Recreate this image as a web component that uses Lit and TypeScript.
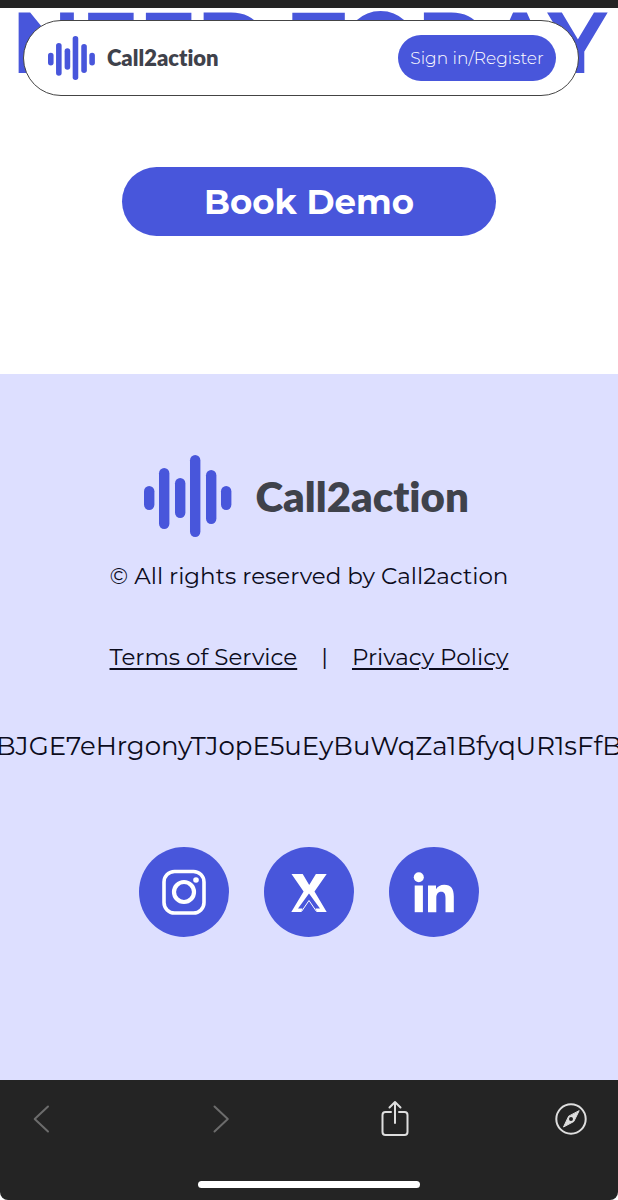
import { LitElement, html, css, svg } from "lit";
import { customElement } from "lit/decorators.js";

const bars = [
  [0, 31, 24],
  [15, 13, 61],
  [31, 23, 40],
  [46, 0, 82],
  [62, 15, 54],
  [77, 31, 24],
];

@customElement("brand-logo")
export class BrandLogo extends LitElement {
  static styles = css`
    :host {
      display: flex;
      align-items: center;
      gap: var(--logo-gap, 12px);
      color: #3f424b;
      font-family: Lato, sans-serif;
      font-size: var(--logo-size, 22px);
      font-weight: 800;
      font-variant-ligatures: none;
      line-height: 1;
    }
    .mark {
      height: var(--mark-height, 44px);
      width: auto;
      fill: #4856db;
      display: block;
    }
  `;
  render() {
    return html`
      <svg class="mark" viewBox="0 0 87.400 82" aria-hidden="true">
        ${bars.map(([x, y, h]) => svg`<rect x=${x} y=${y} width="10.4" height=${h} rx="5.2" />`)}
      </svg>
      <span>Call2action</span>
    `;
  }
}

@customElement("app-root")
export class AppRoot extends LitElement {
  static styles = css`
    :host {
      display: flex;
      flex-direction: column;
      position: relative;
      min-height: 100vh;
      background: #fff;
      color: #0c0c1c;
      font-family: Montserrat, Inter, "Open Sans", sans-serif;
      overflow: hidden;
    }
    .status {
      height: 8px;
      background: #242424;
    }
    .nav {
      position: absolute;
      z-index: 1;
      top: 20px;
      left: 23px;
      right: 39px;
      box-sizing: border-box;
      height: 76px;
      padding: 0 22px 0 24px;
      display: flex;
      align-items: center;
      justify-content: space-between;
      background: #fff;
      border: 1px solid #444;
      border-radius: 38px;
    }
    button {
      border: 0;
      padding: 0;
      font-family: inherit;
      background: none;
      cursor: pointer;
    }
    .signin {
      width: 158px;
      height: 46px;
      border-radius: 23px;
      background: #4856db;
      color: #fff;
      font-size: 17px;
      font-weight: 300;
    }
    .hero {
      display: flex;
      flex-direction: column;
      align-items: center;
      gap: 89px;
      height: 366px;
    }
    .title {
      margin: 0;
      color: #4856db;
      font-size: 86px;
      font-weight: 700;
      line-height: 70px;
      white-space: nowrap;
    }
    .demo {
      width: 374px;
      height: 69px;
      border-radius: 35px;
      background: #4856db;
      color: #fff;
      font-size: 34px;
      font-weight: 700;
    }
    .footer {
      flex: 1;
      display: flex;
      flex-direction: column;
      align-items: center;
      padding-top: 81px;
      background: #dddfff;
      font-size: 23px;
      line-height: 30px;
    }
    .footer-logo {
      --mark-height: 82px;
      --logo-size: 42px;
      --logo-gap: 24px;
      padding-right: 5px;
    }
    .copyright {
      margin: 24px 0 51px;
    }
    .legal {
      display: flex;
      gap: 24px;
    }
    .legal a {
      color: inherit;
      text-underline-offset: 3px;
      text-decoration-thickness: 2px;
    }
    .key {
      margin: 59px 0 86px;
      font-size: 26px;
      white-space: nowrap;
    }
    .social {
      display: flex;
      gap: 35px;
    }
    .social a {
      width: 90px;
      height: 90px;
      border-radius: 50%;
      background: #4856db;
    }
    .social svg {
      display: block;
      width: 90px;
      height: 90px;
    }
    .browser {
      background: #fff;
    }
    .panel {
      box-sizing: border-box;
      height: 120px;
      padding: 17px 29px 12px 24px;
      display: flex;
      flex-direction: column;
      justify-content: space-between;
      background: #242424;
      border-radius: 0 0 8px 8px;
    }
    .tools {
      display: flex;
      justify-content: space-between;
    }
    .tools svg {
      display: block;
      flex: none;
      width: 44px;
      height: 44px;
      fill: none;
      stroke: #dedede;
      stroke-width: 2;
      stroke-linecap: round;
      stroke-linejoin: round;
    }
    .tools .dim svg {
      stroke: #6c6c6c;
    }
    .tools button {
      width: 36px;
      display: flex;
      justify-content: center;
    }
    .home {
      align-self: center;
      width: 222px;
      height: 7px;
      margin-left: 5px;
      border-radius: 4px;
      background: #fff;
    }
  `;

  render() {
    return html`
      <div class="status"></div>
      <header class="nav">
        <brand-logo></brand-logo>
        <button class="signin">Sign in/Register</button>
      </header>
      <main class="hero">
        <h1 class="title">NEED TODAY</h1>
        <button class="demo">Book Demo</button>
      </main>
      <footer class="footer">
        <brand-logo class="footer-logo"></brand-logo>
        <p class="copyright">© All rights reserved by Call2action</p>
        <nav class="legal">
          <a href="#terms">Terms of Service</a>
          <span>|</span>
          <a href="#privacy">Privacy Policy</a>
        </nav>
        <p class="key">BJGE7eHrgonyTJopE5uEyBuWqZa1BfyqUR1sFfB</p>
        <div class="social">
          <a href="#instagram" aria-label="Instagram">
            <svg viewBox="0 0 90 90" fill="none" stroke="#fff">
              <rect x="25" y="24.5" width="40" height="41.5" rx="10.5" stroke-width="3.6" />
              <circle cx="45" cy="45" r="10" stroke-width="4.2" />
              <circle cx="57" cy="33" r="2.8" fill="#fff" stroke="none" />
            </svg>
          </a>
          <a href="#x" aria-label="X">
            <svg viewBox="0 0 90 90" fill="#fff">
              <path d="M27.500 27h11.200l6.500 11 6.700-11h10.800L50.500 44.500 62.700 65H27.300l12.300-20.500Z" />
              <path d="M45 46.500 34 61.500h4.500L37 65.500h16l-1.500-4H56L45 46.500Z" fill="#4856db" />
              <path d="M37.500 64.500 45 53.500l7.500 11" fill="none" stroke="#fff" stroke-width="1" />
            </svg>
          </a>
          <a href="#linkedin" aria-label="LinkedIn">
            <svg viewBox="0 0 90 90" fill="#fff">
              <circle cx="29.8" cy="30.3" r="5" />
              <rect x="25.7" y="38.5" width="8.2" height="26.7" />
              <path d="M39 38.5h8v3.7c1.7-2.9 4.5-4.5 8.2-4.5 7 0 9.6 4.4 9.6 11.7v15.8h-8.3V51c0-4-1-6.300-4.300-6.300-3.400 0-4.900 2.500-4.900 6.400v14.100H39Z" />
            </svg>
          </a>
        </div>
      </footer>
      <div class="browser">
        <div class="panel">
          <div class="tools">
            <button class="dim" aria-label="Back">
              <svg viewBox="0 0 44 44"><path d="M28 9.500 14.700 22 28 34.500" /></svg>
            </button>
            <button class="dim" aria-label="Forward">
              <svg viewBox="0 0 44 44"><path d="M18.500 9.500 31.800 22 18.500 34.500" /></svg>
            </button>
            <button aria-label="Share">
              <svg viewBox="0 0 44 44">
                <path d="M18 15h-5.500q-3 0-3 3v17q0 3 3 3h19q3 0 3-3V18q0-3-3-3H26M22 26V5M16.500 10.500 22 5l5.500 5.500" />
              </svg>
            </button>
            <button aria-label="Open in browser">
              <svg viewBox="0 0 44 44">
                <circle cx="22" cy="22" r="14.700" />
                <path d="M30 14 24.800 24.500 14.500 30 19.500 19.500Z" fill="#dedede" stroke-width="1" />
                <circle cx="22" cy="22" r="2" fill="#242424" stroke="none" />
              </svg>
            </button>
          </div>
          <div class="home"></div>
        </div>
      </div>
    `;
  }
}
